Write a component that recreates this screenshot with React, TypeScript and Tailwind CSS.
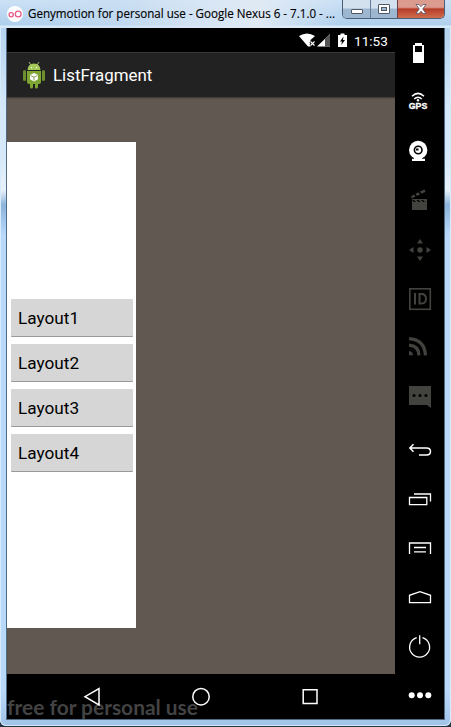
import type { ReactNode } from 'react';

function Cell({ children, dim = false }: { children: ReactNode; dim?: boolean }) {
  return (
    <svg viewBox="0 0 49 49" className={`block h-[49px] w-[49px] shrink-0 ${dim ? 'text-[#42423e]' : 'text-white'}`} fill="currentColor">
      {children}
    </svg>
  );
}

function DeviceToolbar() {
  return (
    <aside className="flex w-[49px] shrink-0 flex-col bg-black">
      <Cell>
        <path fillRule="evenodd" d="M20 15h7v2h2v18H18V17h2zM20 18v6h7v-6z" />
      </Cell>
      <Cell>
        <g fill="none" stroke="currentColor" strokeWidth="1.5">
          <path d="M17 19.3Q23 13.500 29 19.3M19.2 22Q23 18.400 26.8 22" />
        </g>
        <circle cx="23" cy="23.2" r="1.2" />
        <text x="13.8" y="32.2" fontSize="8.2" fontWeight="900" fontFamily="'Liberation Sans', Arial, sans-serif" stroke="currentColor" strokeWidth=".3" textLength="18.5" lengthAdjust="spacingAndGlyphs">GPS</text>
      </Cell>
      <Cell>
        <circle cx="23.2" cy="24" r="9.2" />
        <path d="M19 31h8v1.800h3V35H17v-2.200h2z" />
        <circle cx="23.2" cy="24" r="3.8" fill="none" stroke="#000" strokeWidth="1.6" />
        <path d="M21 22.500h2.500v2H21z" fill="#000" />
      </Cell>
      <Cell dim>
        <path fillRule="evenodd" d="M17 24h15v11H17zM17 25l2 2h2l-2-2zm4.500 0 2 2h2l-2-2zm4.500 0 2 2h2l-2-2z" />
        <path d="m16.300 21 2.700-1.500 1.500 2-4 2zM20.500 18.800l3-1.600 1.500 2.300-3 1.400zM25 16.500l4.500-2 1 2.300-4 2z" />
      </Cell>
      <Cell dim>
        <circle cx="25" cy="26" r="2.700" />
        <path d="m25 15 3 4.500h-6zM25 37l3-4.500h-6zM14 26l4.500-3v6zM36 26l-4.500-3v6z" />
      </Cell>
      <Cell dim>
        <rect x="14.800" y="15.800" width="20.500" height="20.500" fill="none" stroke="currentColor" strokeWidth="1.600" />
        <path d="M19 20h2v11.500h-2z" />
        <path d="M24.500 21h2q4.500 0 4.500 4.800t-4.500 4.700h-2z" fill="none" stroke="currentColor" strokeWidth="2" />
      </Cell>
      <Cell dim>
        <path d="M14 29q3.700.300 4 4.300h-4z" />
        <path d="M14 23.200q9.500.500 10 10.100M14 16.700q15.500 1 16.500 16.600" fill="none" stroke="currentColor" strokeWidth="3.300" />
      </Cell>
      <Cell dim>
        <path d="M14 15h22v22l-4-3H14z" />
        <g fill="#000"><circle cx="19" cy="24.500" r="1.600" /><circle cx="25" cy="24.500" r="1.600" /><circle cx="31" cy="24.500" r="1.600" /></g>
      </Cell>
      <Cell>
        <path d="M18.500 24.200 14.800 28l3.700 3.800M15 28h16.500q4 0 4 3.500t-4 3.500H24" fill="none" stroke="currentColor" strokeWidth="1.500" />
      </Cell>
      <Cell>
        <path d="M14.500 28.500h17.300v7.200H14.500zM19 25h16.500v7.500" fill="none" stroke="currentColor" strokeWidth="1.300" />
      </Cell>
      <Cell>
        <path d="M14.500 36V25h21v11M19 29.500h12M19 33.800h12" fill="none" stroke="currentColor" strokeWidth="1.300" />
      </Cell>
      <Cell>
        <path d="M14.500 35.700V28.300L25 24.700l10.500 3.600v7.400z" fill="none" stroke="currentColor" strokeWidth="1.300" />
      </Cell>
      <Cell>
        <path d="M22 21.300A10 10 0 1 0 27.800 21.300M25 19v9" transform="translate(-.3 .3)" fill="none" stroke="currentColor" strokeWidth="1.300" />
      </Cell>
      <Cell>
        <circle cx="16.700" cy="30.200" r="3" /><circle cx="25" cy="30.200" r="3" /><circle cx="33.300" cy="30.200" r="3" />
      </Cell>
    </aside>
  );
}

function AndroidLogo() {
  return (
    <svg viewBox="0 0 22 27" className="h-[27px] w-[22px]" fill="#91b83b">
      <path d="m6 0 2 3M16 0l-2 3" stroke="#9eb978" />
      <path d="M4.500 8Q5 1.500 11 1.500T17.500 8z" fill="#a4c958" />
      <rect y="8" width="3" height="11" rx="1.500" fill="#6d8f2c" />
      <rect x="19" y="8" width="3" height="11" rx="1.500" fill="#6d8f2c" />
      <path d="M4 9h14v11q0 2-2 2h-1v3q0 1.500-1.700 1.500T12 25v-3h-2v3q0 1.500-1.500 1.500T7 25v-3H6q-2 0-2-2z" fill="#7fa533" />
      <path d="m11 11 4 2v4.300L11 19.500l-4-2.200V13z" fill="#fff" />
      <path d="m7.500 13.500 3.500 1.700 3.500-1.700M11 15v3.500" fill="none" stroke="#6d8f2c" strokeWidth=".8" />
      <path d="M8 5h1v1H8zm5 0h1v1h-1z" fill="#fff" />
    </svg>
  );
}

function StatusBar() {
  return (
    <div className="flex h-6 items-center justify-end bg-black pr-[7px] text-white">
      <svg viewBox="0 0 50 16" className="h-4 w-[50px]">
        <path d="M0 4Q8-1 16 4l-4.500 4v6.500H9z" fill="#fff" />
        <path d="m11.500 9.500 4 4m0-4-4 4" stroke="#000" strokeWidth="3" /><path d="m11.500 9.500 4 4m0-4-4 4" stroke="#fff" strokeWidth="1.100" />
        <path d="M31 2v12.500H18z" fill="#fff" /><path d="M26 6.500 31 2v12.500h-5z" fill="#555" />
        <path d="M39 3h2.500V1.500h4V3H48v12h-9z" fill="#fff" />
        <path d="m44.500 4.500-3.500 5h2L42.300 13l3.700-5h-2z" fill="#000" />
      </svg>
      <span className="ml-[5px] w-[34px] pt-0.5 text-[13.600px] leading-6 whitespace-nowrap">11:53</span>
    </div>
  );
}

function TitleBar() {
  return (
    <header className="flex h-7 items-start bg-[linear-gradient(#cce1f5_0,#aecfed_25px,#d7eafa_26px)]">
      <div className="flex h-7 flex-1 items-center bg-[linear-gradient(90deg,transparent,#c9ddf199_35%,#e0eaf5_75%,transparent)] pl-[7px]">
        <svg viewBox="0 0 16 16" className="h-4 w-4 shrink-0">
          <circle cx="8" cy="8" r="8" fill="#fff" />
          <g fill="none" stroke="#e85b86" strokeWidth="1.300"><circle cx="4.200" cy="8.800" r="2.100" /><circle cx="11.200" cy="8" r="2.900" /></g>
        </svg>
        <svg className="ml-1 h-7 w-[310px] shrink-0 overflow-visible" viewBox="0 0 310 28">
          <text x="1" y="18" textLength="307" lengthAdjust="spacingAndGlyphs" fontSize="12" fontFamily="'Open Sans', 'Noto Sans', sans-serif" fill="#000" stroke="#000" strokeWidth=".15">Genymotion for personal use - Google Nexus 6 - 7.1.0 - ...</text>
        </svg>
      </div>
      <div className="mr-[6px] flex h-[19px] w-[103px] shrink-0 overflow-hidden rounded-b-[5px] border border-t-0 border-[#4c5f77]">
        <div className="flex w-7 items-center justify-center border-r border-[#657d98] bg-linear-to-b from-[#d3e0ee] from-45% to-[#9eb7d1] to-50%"><span className="mt-1 h-[5px] w-3 rounded-[1px] border border-[#505964] bg-white" /></div>
        <div className="flex w-[27px] items-center justify-center border-r border-[#6b4147] bg-linear-to-b from-[#d3e0ee] from-45% to-[#9eb7d1] to-50%"><span className="flex h-[10px] w-3 items-center justify-center rounded-[1px] border border-[#505964] bg-white"><span className="h-1 w-[6px] border border-[#505964] bg-[#9eb7d1]" /></span></div>
        <div className="flex flex-1 items-center justify-center bg-linear-to-b from-[#dc9b8f] from-40% via-[#b63b29] via-50% to-[#cf6d4e]">
          <svg viewBox="0 0 12 10" className="h-[10px] w-3"><path d="M1 .5h3l2 2.200L8 .5h3L7.700 5 11 9.500H8L6 7.200 4 9.500H1L4.300 5z" fill="#fff" stroke="#545766" strokeWidth=".8" /></svg>
        </div>
      </div>
    </header>
  );
}

export default function App() {
  return (
    <main className="h-[727px] w-[451px] overflow-hidden bg-[#263442] font-[Roboto,'Liberation_Sans',sans-serif]">
      <div className="h-[726px] rounded-t-[5px] rounded-b-[6px] bg-[linear-gradient(#a9cbea_0,#d6e9fa_110px,#d6e9fa_155px,#e8f1f9_190px,#8db4dc_205px,#b9d9fb_235px,#b9d9fb_690px,#a0c3e7_726px)] shadow-[inset_0_0_0_1px_#d7eafa]">
        <TitleBar />
        <div className="mx-[6px] flex h-[692px] border-x border-b border-[#516b84] bg-black">
          <div className="flex w-[388px] flex-col">
            <StatusBar />
            <div className="flex h-[45px] items-center border-t border-[#373737] bg-[#222] pl-4">
              <AndroidLogo />
              <span className="ml-2 text-[16.900px] leading-5 text-white">ListFragment</span>
            </div>
            <div className="h-[577px] bg-[#615951] pt-[45px] shadow-[inset_0_2px_2px_-1px_#37332f]">
              <div className="flex h-[486px] w-[129px] flex-col justify-center gap-2 bg-white pr-[3px] pl-1">
                {['Layout1', 'Layout2', 'Layout3', 'Layout4'].map((label) => (
                  <button key={label} className="h-[37px] w-[122px] rounded-[1px] bg-[#d6d6d6] pl-[7px] text-left text-[17.200px] leading-5 text-black shadow-[0_1px_0_#999]">{label}</button>
                ))}
              </div>
            </div>
            <nav className="h-[45px] bg-black">
              <svg viewBox="0 0 388 45" className="h-[45px] w-[388px]" fill="none" stroke="#fff" strokeWidth="1.500">
                <text x="0" y="40.500" textLength="191" lengthAdjust="spacingAndGlyphs" fill="#434343" stroke="none" fontFamily="Lato, sans-serif" fontSize="20" fontWeight="700">free for personal use</text>
                <path d="M92 14.500v16.500L78 22.700z" />
                <circle cx="194" cy="22.700" r="8.200" />
                <path d="M296.200 15.700h13.800v13.800h-13.800z" />
              </svg>
            </nav>
          </div>
          <DeviceToolbar />
        </div>
      </div>
    </main>
  );
}
